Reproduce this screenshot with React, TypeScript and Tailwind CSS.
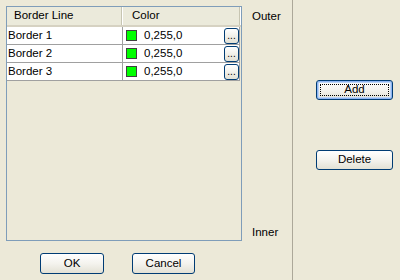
const rows = ["Border 1", "Border 2", "Border 3"];

function XpButton({ label, focused, className }: { label: string; focused?: boolean; className: string }) {
  return (
    <button
      className={`${className} rounded-[3px] border border-[#003c74] bg-gradient-to-b from-[#ffffff] via-[#f4f3ee] to-[#e3e1d5] text-[11.5px] text-black flex items-center justify-center p-0 ${
        focused ? "shadow-[inset_0_0_0_1px_#8cb4f2,inset_0_0_0_2px_#bcd4f6]" : ""
      }`}
    >
      {focused ? (
        <span className="w-[calc(100%-6px)] h-[calc(100%-6px)] border border-dotted border-black flex items-center justify-center leading-none">
          {label}
        </span>
      ) : (
        label
      )}
    </button>
  );
}

export default function App() {
  return (
    <div
      className="w-[400px] h-[280px] bg-[#ece9d8] flex text-black"
      style={{ fontFamily: '"Liberation Sans", Arial, sans-serif' }}
    >
      {/* Left side: list + labels + buttons */}
      <div className="w-[292px] h-full flex flex-col">
        <div className="flex pt-[6px] pl-[6px]">
          <div className="w-[236px] h-[235px] border border-[#7f9db9] bg-[#ece9d8] flex flex-col">
            <div className="h-[20px] flex bg-[#ebeadb] border-b-2 border-[#d6d2c2] text-[11.5px]">
              <div className="w-[115px] pl-[7px] flex items-center border-r border-[#c7c5b2]">Border Line</div>
              <div className="w-[1px] h-full bg-white" />
              <div className="flex-1 pl-[9px] flex items-center border-r border-[#c7c5b2]">Color</div>
              <div className="w-[1px] h-full bg-white" />
            </div>
            {rows.map((r) => (
              <div key={r} className="h-[18px] flex border-b border-[#a0a0a0] w-[233px] text-[11.5px]">
                <div className="w-[116px] bg-white flex items-center pl-[1px] border-r border-[#a0a0a0]">{r}</div>
                <div className="flex-1 bg-white flex items-center border-r border-[#a0a0a0]">
                  <div className="ml-[3px] w-[11px] h-[11px] border border-[#404040] bg-[#00ff00]" />
                  <span className="ml-[7px] flex-1">0,255,0</span>
                  <div className="w-[15px] h-[16px] rounded-[3px] border border-[#003c74] bg-gradient-to-b from-white to-[#e3e1d5] flex items-end justify-center text-[10px] leading-[12px] pb-[1px]">
                    ...
                  </div>
                </div>
              </div>
            ))}
          </div>
          <div className="flex-1 flex flex-col justify-between pl-[10px] text-[11.5px] pt-[2px]">
            <span>Outer</span>
            <span>Inner</span>
          </div>
        </div>
        <div className="flex pt-[12px] pl-[40px] gap-[28px]">
          <XpButton label="OK" className="w-[64px] h-[21px]" />
          <XpButton label="Cancel" className="w-[63px] h-[21px]" />
        </div>
      </div>
      <div className="w-[1px] h-full bg-[#aca899]" />
      {/* Right side buttons */}
      <div className="flex-1 flex flex-col pl-[23px] pt-[80px] gap-[50px]">
        <XpButton label="Add" focused className="w-[77px] h-[20px]" />
        <XpButton label="Delete" className="w-[77px] h-[20px]" />
      </div>
    </div>
  );
}
